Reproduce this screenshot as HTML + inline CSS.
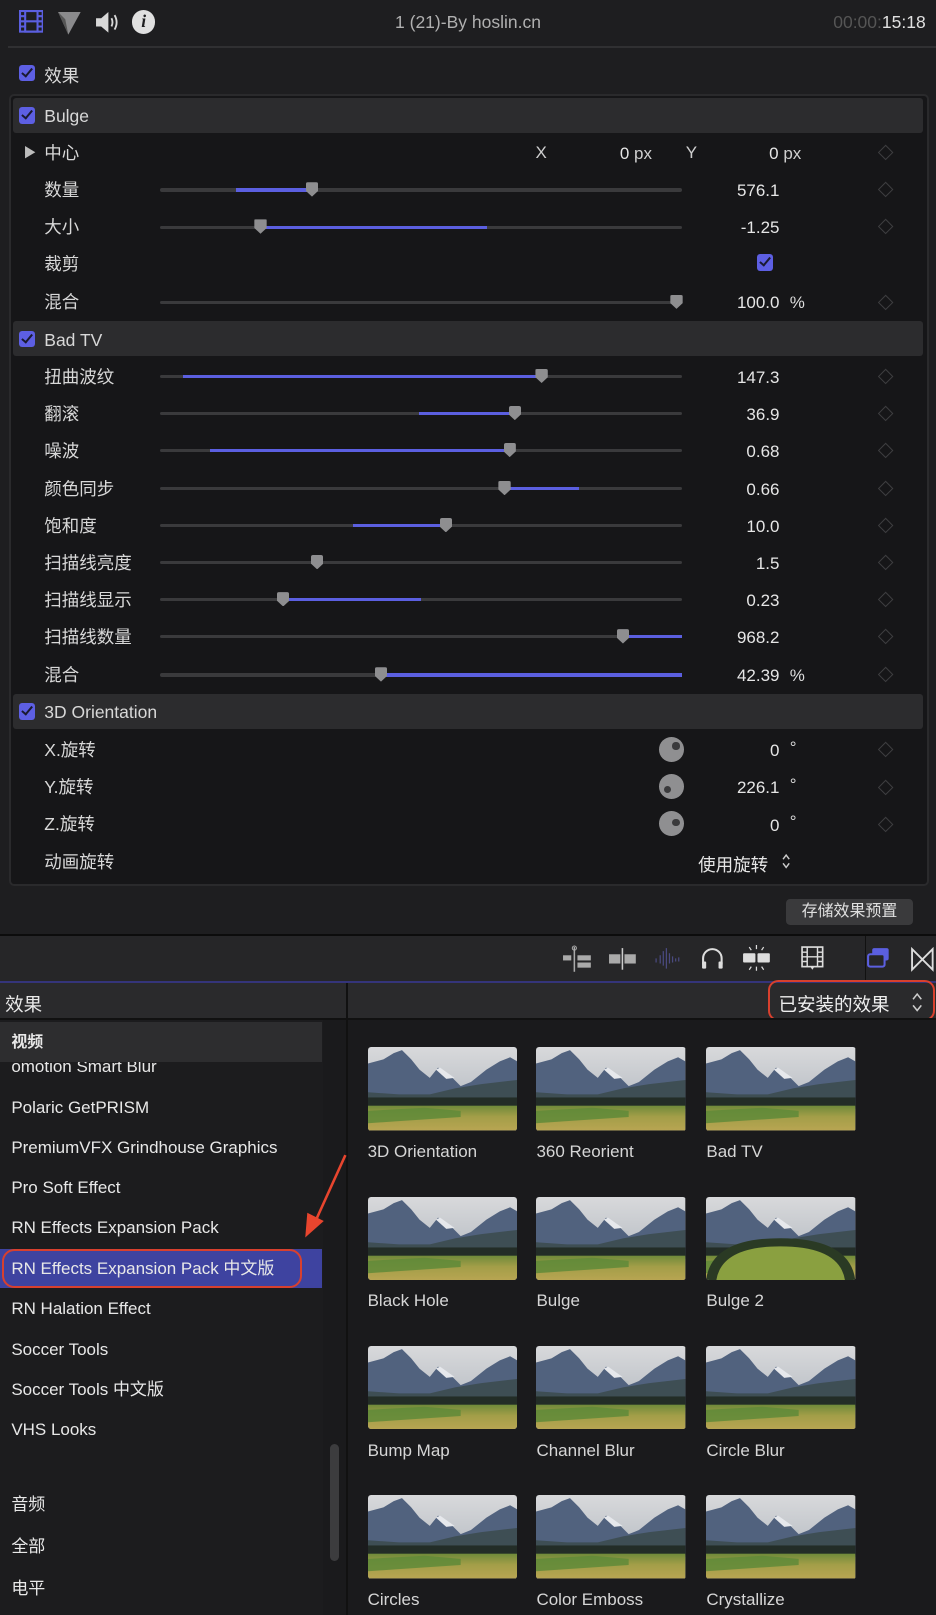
<!DOCTYPE html>
<html><head><meta charset="utf-8"><style>
html,body{margin:0;padding:0;background:#1c1c1e;}
body{width:936px;height:1615px;overflow:hidden;}
#w{position:relative;width:909px;height:1568px;zoom:1.0297;font-family:"Liberation Sans","Noto Sans CJK SC",sans-serif;color:#dcdcdc;background:#1e1e20;overflow:hidden;}
.a{position:absolute;}
.cb{position:absolute;width:16px;height:16px;border-radius:3px;background:#5d5fe3;}
.cb:after{content:"";position:absolute;left:5px;top:1px;width:4px;height:9px;border:solid #1a1a30;border-width:0 2px 2px 0;transform:rotate(40deg);}
.lbl{position:absolute;left:43px;font-size:17px;color:#d8d8d8;line-height:20px;margin-top:1px;}
.trk{position:absolute;left:155px;width:507px;height:3px;background:#3a3a3c;border-radius:2px;}
.fill{position:absolute;height:3px;background:#5b5fe0;top:0;}
.th{position:absolute;top:-6px;width:12px;height:14px;margin-left:-6px;background:#8e8e90;clip-path:polygon(0 0,100% 0,100% 60%,50% 100%,0 60%);border-radius:2px;}
.val{position:absolute;right:152px;font-size:16.5px;color:#e6e6e6;text-align:right;line-height:20px;margin-top:1px;}
.unit{position:absolute;left:767px;font-size:16.5px;color:#dcdcdc;line-height:20px;margin-top:1px;}
.dia{position:absolute;left:855px;width:9px;height:9px;border:1px solid #3e3e40;transform:rotate(45deg);}
.sec{position:absolute;left:13px;width:883px;height:34px;background:#2c2c2e;border-radius:3px;}
.sec span{position:absolute;left:30px;top:8px;font-size:17px;color:#d8d8d8;}
.li{position:absolute;left:11px;font-size:16.5px;color:#e8e8e8;line-height:20px;margin-top:1px;}
.tn{position:absolute;width:145px;height:81px;border-radius:3px;overflow:hidden;}
.tt{position:absolute;font-size:16.5px;color:#d6d6d6;margin-top:1px;}
.knob{position:absolute;left:640px;width:24px;height:24px;border-radius:50%;background:#8f8f91;}
.knob i{position:absolute;width:7px;height:7px;border-radius:50%;background:#3a3a3c;}
</style></head><body><div id="w">
<div class="a" style="left:0;top:0;width:909px;height:44px;background:#1e1e20;"></div>
<svg class="a" style="left:18px;top:10px" width="24" height="22"><rect x="1" y="1" width="22" height="20" fill="none" stroke="#5b5fe0" stroke-width="2"/><rect x="6" y="1" width="12" height="20" fill="none" stroke="#5b5fe0" stroke-width="2"/><path d="M1 6h5M1 11h5M1 16h5M18 6h5M18 11h5M18 16h5M6 11h12" stroke="#5b5fe0" stroke-width="2"/></svg>
<svg class="a" style="left:55px;top:11px" width="24" height="24"><path d="M1 1L23 1L11 23Z" fill="#8a8a8c"/><path d="M1 1L11 23L8 8Z" fill="#555"/></svg>
<svg class="a" style="left:92px;top:11px" width="24" height="22"><path d="M1 7h5l7-6v20l-7-6H1z" fill="#d8d8d8"/><path d="M16 7q2 4 0 8M19 4q4 7 0 14" stroke="#d8d8d8" stroke-width="1.8" fill="none"/></svg>
<div class="a" style="left:128px;top:10px;width:23px;height:23px;border-radius:50%;background:#e0e0e0;color:#1e1e20;font:italic bold 17px 'Liberation Serif',serif;text-align:center;line-height:23px;">i</div>
<div class="a" style="left:0;width:909px;top:12px;text-align:center;font-size:17px;color:#b0b0b0;">1 (21)-By hoslin.cn</div>
<div class="a" style="right:10px;top:12px;font-size:17px;color:#e0e0e0;"><span style="color:#555">00:00:</span>15:18</div>
<div class="a" style="left:8px;top:45px;width:920px;height:2px;background:#303032;"></div>
<div class="cb" style="left:18px;top:63px"></div><div class="a" style="left:43px;top:61px;font-size:17px">效果</div>
<div class="a" style="left:9px;top:91px;width:889px;height:766px;border:2px solid #2a2a2c;border-radius:5px;background:#161618;"></div>
<div class="sec" style="top:95px"><div class="cb" style="left:5px;top:9px"></div><span>Bulge</span></div>
<svg class="a" style="left:23px;top:141px" width="12" height="14"><path d="M1 1L11 7L1 13Z" fill="#bdbdbd"/></svg>
<div class="lbl" style="top:138px">中心</div>
<div class="a" style="left:520px;top:139px;font-size:16.5px;color:#cfcfcf">X</div>
<div class="a" style="left:602px;top:140px;font-size:16.5px;color:#e6e6e6">0 <span style="color:#cfcfcf">px</span></div>
<div class="a" style="left:666px;top:139px;font-size:16.5px;color:#cfcfcf">Y</div>
<div class="a" style="left:747px;top:140px;font-size:16.5px;color:#e6e6e6">0 <span style="color:#cfcfcf">px</span></div>
<div class="dia" style="top:143px"></div>

<div class="lbl" style="top:174px">数量</div><div class="trk" style="top:183px"><div class="fill" style="left:74px;width:74px"></div><div class="th" style="left:148px"></div></div><div class="val" style="top:175px">576.1</div><div class="dia" style="top:179px"></div>
<div class="lbl" style="top:210px">大小</div><div class="trk" style="top:219px"><div class="fill" style="left:98px;width:220px"></div><div class="th" style="left:98px"></div></div><div class="val" style="top:211px">-1.25</div><div class="dia" style="top:215px"></div>
<div class="lbl" style="top:246px">裁剪</div><div class="cb" style="left:735px;top:247px"></div>
<div class="lbl" style="top:283px">混合</div><div class="trk" style="top:292px"><div class="th" style="left:502px"></div></div><div class="val" style="top:284px">100.0</div><div class="unit" style="top:284px">%</div><div class="dia" style="top:288px"></div>

<div class="sec" style="top:312px"><div class="cb" style="left:5px;top:9px"></div><span>Bad TV</span></div>
<div class="lbl" style="top:355px">扭曲波纹</div><div class="trk" style="top:364px"><div class="fill" style="left:23px;width:348px"></div><div class="th" style="left:371px"></div></div><div class="val" style="top:356px">147.3</div><div class="dia" style="top:360px"></div>
<div class="lbl" style="top:391px">翻滚</div><div class="trk" style="top:400px"><div class="fill" style="left:252px;width:93px"></div><div class="th" style="left:345px"></div></div><div class="val" style="top:392px">36.9</div><div class="dia" style="top:396px"></div>
<div class="lbl" style="top:427px">噪波</div><div class="trk" style="top:436px"><div class="fill" style="left:49px;width:291px"></div><div class="th" style="left:340px"></div></div><div class="val" style="top:428px">0.68</div><div class="dia" style="top:432px"></div>
<div class="lbl" style="top:464px">颜色同步</div><div class="trk" style="top:473px"><div class="fill" style="left:335px;width:72px"></div><div class="th" style="left:335px"></div></div><div class="val" style="top:465px">0.66</div><div class="dia" style="top:469px"></div>
<div class="lbl" style="top:500px">饱和度</div><div class="trk" style="top:509px"><div class="fill" style="left:188px;width:90px"></div><div class="th" style="left:278px"></div></div><div class="val" style="top:501px">10.0</div><div class="dia" style="top:505px"></div>
<div class="lbl" style="top:536px">扫描线亮度</div><div class="trk" style="top:545px"><div class="th" style="left:153px"></div></div><div class="val" style="top:537px">1.5</div><div class="dia" style="top:541px"></div>
<div class="lbl" style="top:572px">扫描线显示</div><div class="trk" style="top:581px"><div class="fill" style="left:120px;width:134px"></div><div class="th" style="left:120px"></div></div><div class="val" style="top:573px">0.23</div><div class="dia" style="top:577px"></div>
<div class="lbl" style="top:608px">扫描线数量</div><div class="trk" style="top:617px"><div class="fill" style="left:450px;width:57px"></div><div class="th" style="left:450px"></div></div><div class="val" style="top:609px">968.2</div><div class="dia" style="top:613px"></div>
<div class="lbl" style="top:645px">混合</div><div class="trk" style="top:654px"><div class="fill" style="left:215px;width:292px"></div><div class="th" style="left:215px"></div></div><div class="val" style="top:646px">42.39</div><div class="unit" style="top:646px">%</div><div class="dia" style="top:650px"></div>

<div class="sec" style="top:674px"><div class="cb" style="left:5px;top:9px"></div><span>3D Orientation</span></div>
<div class="lbl" style="top:718px">X.旋转</div><div class="knob" style="top:716px"><i style="left:13px;top:5px"></i></div><div class="val" style="top:719px">0</div><div class="unit" style="top:716px">°</div><div class="dia" style="top:723px"></div>
<div class="lbl" style="top:754px">Y.旋转</div><div class="knob" style="top:752px"><i style="left:5px;top:11px"></i></div><div class="val" style="top:755px">226.1</div><div class="unit" style="top:752px">°</div><div class="dia" style="top:759px"></div>
<div class="lbl" style="top:790px">Z.旋转</div><div class="knob" style="top:788px"><i style="left:13px;top:7px"></i></div><div class="val" style="top:791px">0</div><div class="unit" style="top:788px">°</div><div class="dia" style="top:795px"></div>
<div class="lbl" style="top:826px">动画旋转</div><div class="a" style="left:678px;top:827px;font-size:17px;color:#e6e6e6">使用旋转</div>
<svg class="a" style="left:758px;top:828px" width="10" height="16"><path d="M2 6l3-4 3 4M2 10l3 4 3-4" fill="none" stroke="#ccc" stroke-width="1.4"/></svg>

<div class="a" style="left:0;top:860px;width:909px;height:48px;background:#1e1e20;"></div>
<div class="a" style="left:763px;top:873px;width:124px;height:25px;background:#3a3a3c;border-radius:4px;font-size:15.5px;color:#e0e0e0;text-align:center;line-height:25px;">存储效果预置</div>
<div class="a" style="left:0;top:907px;width:909px;height:2px;background:#0c0c0c;"></div>
<div class="a" style="left:0;top:909px;width:909px;height:45px;background:#262628;"></div>
<div class="a" style="left:840px;top:909px;width:1px;height:45px;background:#111;"></div>
<svg class="a" style="left:546px;top:918px" width="30" height="26"><path d="M12 2v24" stroke="#aaa" stroke-width="1.5"/><circle cx="12" cy="3" r="2" fill="none" stroke="#aaa"/><rect x="1" y="10" width="8" height="5" fill="#aaa"/><rect x="15" y="10" width="13" height="5" fill="#aaa"/><rect x="15" y="17" width="13" height="5" fill="#aaa"/></svg>
<svg class="a" style="left:590px;top:918px" width="28" height="26"><rect x="1" y="9" width="11" height="9" fill="#aaa"/><rect x="16" y="9" width="11" height="9" fill="#aaa"/><path d="M14 3v21" stroke="#ccc" stroke-width="1.5"/></svg>
<svg class="a" style="left:634px;top:918px" width="30" height="26"><path d="M3 13v4M7 10v8M10 6v14M13 3v20M16 8v10M19 11v6M22 13v3M25 12v4" stroke="#4a4a80" stroke-width="1.2"/></svg>
<svg class="a" style="left:680px;top:919px" width="24" height="24"><path d="M3 18v-6a9 9 0 0118 0v6" fill="none" stroke="#ddd" stroke-width="2"/><rect x="2" y="15" width="4" height="7" rx="1" fill="#ddd"/><rect x="18" y="15" width="4" height="7" rx="1" fill="#ddd"/></svg>
<svg class="a" style="left:720px;top:917px" width="30" height="28"><rect x="2" y="9" width="12" height="9" rx="1" fill="#ddd"/><rect x="16" y="9" width="12" height="9" rx="1" fill="#ddd"/><path d="M15 1v4M15 22v4M8 3l2 3M22 3l-2 3M8 25l2-3M22 25l-2-3" stroke="#ddd" stroke-width="1.2"/></svg>
<svg class="a" style="left:777px;top:918px" width="24" height="26"><rect x="2" y="2" width="20" height="19" fill="none" stroke="#ddd" stroke-width="1.6"/><path d="M7 2v19M17 2v19M2 7h5M2 11.5h5M2 16h5M17 7h5M17 11.5h5M17 16h5M7 11.5h10" stroke="#ddd" stroke-width="1.4"/><path d="M10 21l2 3 2-3z" fill="#ddd"/></svg>
<svg class="a" style="left:840px;top:918px" width="26" height="26"><rect x="7" y="3" width="16" height="12" rx="2" fill="#5b5fe0"/><rect x="3" y="9" width="16" height="12" rx="2" fill="#262628" stroke="#5b5fe0" stroke-width="2"/></svg>
<svg class="a" style="left:884px;top:920px" width="24" height="24"><path d="M2 2v20l20-20v20z" fill="none" stroke="#ddd" stroke-width="1.8"/></svg>
<div class="a" style="left:0;top:953px;width:909px;height:2px;background:#34347a;"></div>
<div class="a" style="left:0;top:955px;width:909px;height:34px;background:#2a2a2c;"></div>
<div class="a" style="left:336px;top:955px;width:2px;height:613px;background:#111;"></div>
<div class="a" style="left:5px;top:962px;font-size:18px;color:#e8e8e8">效果</div>
<div class="a" style="left:746px;top:952px;width:158px;height:36px;border:2.5px solid #d8402e;border-radius:10px;"></div>
<div class="a" style="left:756px;top:962px;font-size:18px;color:#eee">已安装的效果</div>
<svg class="a" style="left:885px;top:963px" width="12" height="20"><path d="M2 7l4-5 4 5M2 13l4 5 4-5" fill="none" stroke="#ccc" stroke-width="1.5"/></svg>
<div class="a" style="left:0;top:989px;width:909px;height:2px;background:#111;"></div>
<div class="a" style="left:0;top:991px;width:336px;height:577px;background:#1c1c1e;"></div>
<div class="a" style="left:314px;top:991px;width:22px;height:577px;background:#1a1a1c;"></div>
<div class="a" style="left:320px;top:1402px;width:9px;height:114px;border-radius:5px;background:#3c3c3e;"></div>
<div class="li" style="top:1026px">omotion Smart Blur</div>
<div class="a" style="left:0;top:993px;width:313px;height:38px;background:#2d2d2f;"></div>
<div class="li" style="top:1002px;font-weight:bold;font-size:15.5px">视频</div>
<div class="li" style="top:1065px">Polaric GetPRISM</div>
<div class="li" style="top:1104px">PremiumVFX Grindhouse Graphics</div>
<div class="li" style="top:1143px">Pro Soft Effect</div>
<div class="li" style="top:1182px">RN Effects Expansion Pack</div>
<div class="a" style="left:0;top:1213px;width:313px;height:38px;background:#3e43a0;"></div>
<div class="a" style="left:2px;top:1213px;width:287px;height:34px;border:2.5px solid #d8402e;border-radius:12px;"></div>
<div class="li" style="top:1222px">RN Effects Expansion Pack 中文版</div>
<div class="li" style="top:1261px">RN Halation Effect</div>
<div class="li" style="top:1300px">Soccer Tools</div>
<div class="li" style="top:1339px">Soccer Tools 中文版</div>
<div class="li" style="top:1378px">VHS Looks</div>
<div class="li" style="top:1451px">音频</div>
<div class="li" style="top:1492px">全部</div>
<div class="li" style="top:1532px">电平</div>
<svg class="a" style="left:288px;top:1118px" width="52" height="88"><path d="M47 4L18 68" stroke="#e8452e" stroke-width="2.5"/><path d="M8 84L10 60L26 68Z" fill="#e8452e"/></svg>
<div class="a" style="left:338px;top:991px;width:571px;height:577px;background:#1a1a1c;"></div>
<svg width="0" height="0" style="position:absolute"><defs>
<linearGradient id="sk" x1="0" y1="0" x2="0" y2="1"><stop offset="0" stop-color="#d8d9db"/><stop offset="1" stop-color="#aab1ba"/></linearGradient>
<linearGradient id="fd" x1="0" y1="0" x2="0" y2="1"><stop offset="0" stop-color="#6f8a3a"/><stop offset="0.45" stop-color="#a39e48"/><stop offset="1" stop-color="#b8a552"/></linearGradient>
<g id="ls"><rect width="145" height="81" fill="url(#sk)"/><path d="M0 16L15 12L25 6L33 3L42 12L50 22L60 30L68 20L78 26L90 38L100 34L115 22L128 14L138 10L145 14V60H0Z" fill="#51627e"/><path d="M66 22L70 20L84 30L76 31Z" fill="#e6e8ec"/><path d="M0 44L30 46L60 46L85 40L110 36L145 32V60H0Z" fill="#3e4e54"/><rect y="49" width="145" height="9" fill="#232d27"/><rect y="57" width="145" height="24" fill="url(#fd)"/><path d="M0 62L55 59L90 62V68L30 72L0 74Z" fill="#5f8a38" opacity=".85"/></g>
</defs></svg>
<div class="tn" style="left:357px;top:1017px"><svg width="145" height="81"><use href="#ls"/></svg></div><div class="tt" style="left:357px;top:1108px">3D Orientation</div>
<div class="tn" style="left:521px;top:1017px"><svg width="145" height="81"><use href="#ls"/></svg></div><div class="tt" style="left:521px;top:1108px">360 Reorient</div>
<div class="tn" style="left:686px;top:1017px"><svg width="145" height="81"><use href="#ls"/></svg></div><div class="tt" style="left:686px;top:1108px">Bad TV</div>
<div class="tn" style="left:357px;top:1162px"><svg width="145" height="81"><use href="#ls"/></svg></div><div class="tt" style="left:357px;top:1253px">Black Hole</div>
<div class="tn" style="left:521px;top:1162px"><svg width="145" height="81"><use href="#ls"/></svg></div><div class="tt" style="left:521px;top:1253px">Bulge</div>
<div class="tn" style="left:686px;top:1162px"><svg width="145" height="81"><use href="#ls"/><path d="M0 81Q5 40 72 40Q140 40 145 81Z" fill="#2a3a24"/><path d="M10 81Q15 48 72 48Q130 48 135 81Z" fill="#8aa040"/></svg></div><div class="tt" style="left:686px;top:1253px">Bulge 2</div>
<div class="tn" style="left:357px;top:1307px"><svg width="145" height="81"><use href="#ls"/></svg></div><div class="tt" style="left:357px;top:1398px">Bump Map</div>
<div class="tn" style="left:521px;top:1307px"><svg width="145" height="81"><use href="#ls"/></svg></div><div class="tt" style="left:521px;top:1398px">Channel Blur</div>
<div class="tn" style="left:686px;top:1307px"><svg width="145" height="81"><use href="#ls"/></svg></div><div class="tt" style="left:686px;top:1398px">Circle Blur</div>
<div class="tn" style="left:357px;top:1452px"><svg width="145" height="81"><use href="#ls"/></svg></div><div class="tt" style="left:357px;top:1543px">Circles</div>
<div class="tn" style="left:521px;top:1452px"><svg width="145" height="81"><use href="#ls"/></svg></div><div class="tt" style="left:521px;top:1543px">Color Emboss</div>
<div class="tn" style="left:686px;top:1452px"><svg width="145" height="81"><use href="#ls"/></svg></div><div class="tt" style="left:686px;top:1543px">Crystallize</div>
</div></body></html>
